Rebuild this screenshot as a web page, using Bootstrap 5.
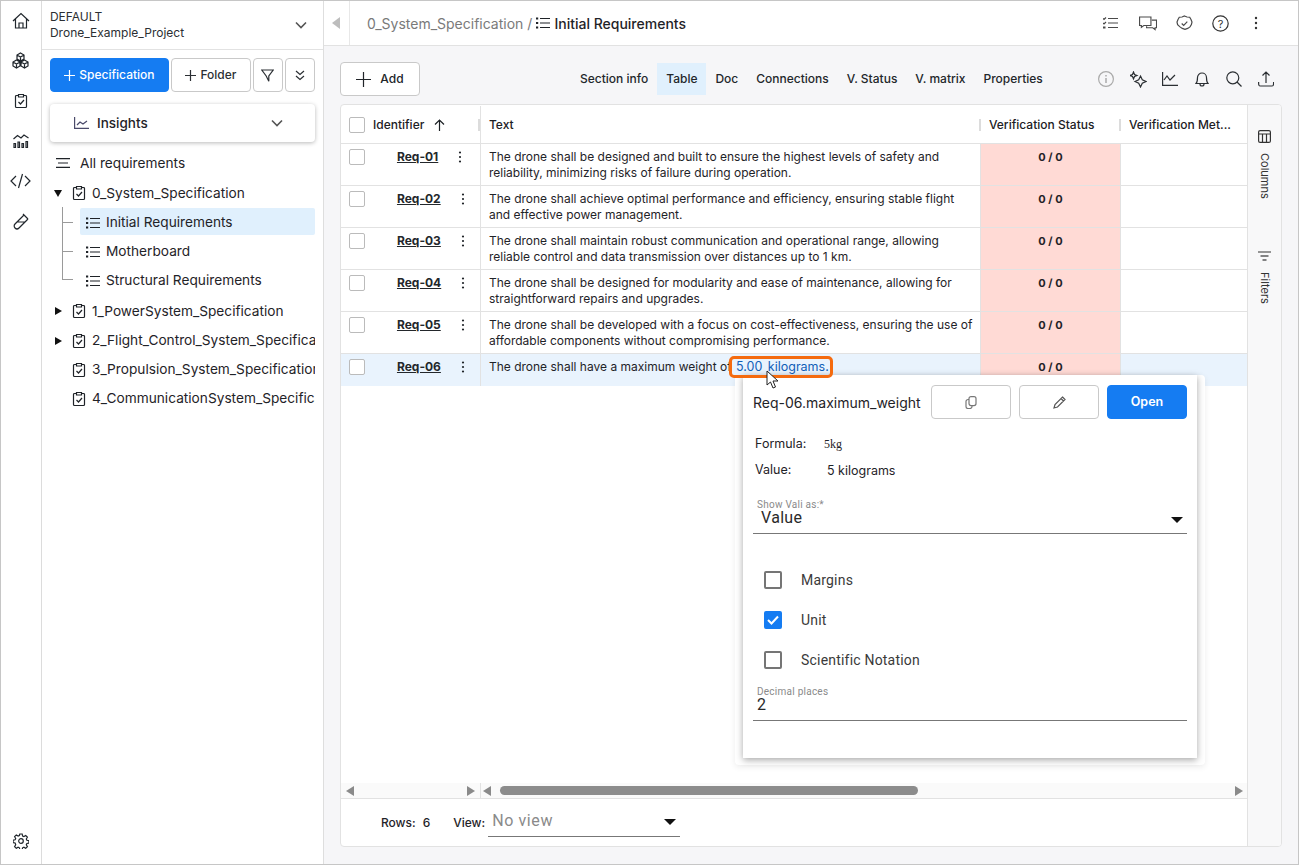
<!DOCTYPE html>
<html lang="en"><head><meta charset="utf-8"><title>Requirements</title>
<link href="https://cdn.jsdelivr.net/npm/bootstrap@5.3.0/dist/css/bootstrap.min.css" rel="stylesheet">
<style>
html,body{margin:0;height:865px;overflow:hidden;background:#fff}
body{font-family:Inter,"Liberation Sans",sans-serif;color:#1f2328;font-size:13px}
svg{display:block;fill:none;stroke:currentColor;stroke-width:1.2;flex:none}
.frame{width:1299px;height:865px;border:1px solid #c6c6c6;position:relative;overflow:hidden}
.rail{width:41px;border-right:1px solid #dcdcdc;padding-top:9px}
.rail-ico{height:40px;display:flex;justify-content:center;padding-top:2px;color:#20262c}
.side{width:282px;border-right:1px solid #dedede}
.side-head{height:49px;border-bottom:1px solid #e2e2e2;padding:0 16px 0 8px;font-size:12px;line-height:16px;color:#2b2f33}
.side-btn{height:34px;border:1px solid #c9c9c9;border-radius:4px;background:#fff;font-size:12px;font-weight:500;color:#2b2f33;padding:0}
.side-btn.btn-primary{background:#157cf2;border-color:#157cf2;color:#fff}
.insights{height:38px;margin:12px 8px 0;border-radius:4px;box-shadow:0 1px 4px rgba(0,0,0,.28);padding:0 32px 0 24px;font-size:13.5px;font-weight:500}
.tree{padding:6px 8px 0}
.tree-row{height:30px;white-space:nowrap;overflow:hidden;font-size:13.7px}
.tree-kid{height:29px;white-space:nowrap;font-size:13.7px;position:relative}
.kid-in{height:27px;margin-left:30px;padding:2px 0 0 6px;border-radius:2px}
.kid-in.on{background:#e0f0fd}
.tree-lines{position:absolute;left:61px;top:206px;width:11px;height:73px;border-left:1px solid #9a9a9a;border-bottom:1px solid #9a9a9a}
.tree-tick{position:absolute;left:62px;width:10px;height:1px;background:#9a9a9a}
.tri-r{width:0;height:0;border-left:7px solid #111;border-top:4px solid transparent;border-bottom:4px solid transparent}
.tri-d{width:0;height:0;border-top:7px solid #111;border-left:4.5px solid transparent;border-right:4.5px solid transparent}
.tri-w{width:17px;display:flex;justify-content:center;flex:none;margin-right:4px}
.clip-i{margin-right:6px;margin-left:1px}
.top-bar{height:45px;border-bottom:1px solid #e2e2e2;background:#fff}
.collapse-zone{width:26px;height:44px;border-right:1px solid #e8e8e8;color:#bdbdbd}
.crumb{padding-left:17px;font-size:14px}
.crumb-now{font-weight:500;margin-top:1px}
.content{background:#f6f6f8;flex:1;padding:16px 16px 17px 16px;min-height:0}
.add-btn{width:80px;height:34px;border:1px solid #c9c9c9;border-radius:4px;background:#fff;font-size:12px;font-weight:500;padding:0}
.tab-item{height:32px;line-height:32px;padding:0 9px;font-size:12px;font-weight:500;color:#23272b}
.tab-item.on{background:#e0f0fd}
.tool-ico{width:32px;display:flex;justify-content:center}
.grid-box{height:743px;margin-top:8px;background:#fff;border:1px solid #e2e2e2;border-radius:4px;overflow:hidden}
.g-main{width:908px;border-right:1px solid #e2e2e2}
.g-side{width:33px;background:#f8f8f9;color:#333}
.g-head{height:39px;border-bottom:1px solid #e2e2e2;font-size:12px;font-weight:500;color:#1c2024;padding-top:1px}
.c-id{width:140px;flex:none;border-right:1px solid #e2e2e2;padding-left:8px;position:relative}
.c-tx{width:500px;flex:none;padding:0 8px;position:relative}
.c-st{width:140px;flex:none;padding:0 8px;position:relative}
.c-me{flex:1;padding:0 8px;white-space:nowrap;overflow:hidden}
.sep{position:absolute;right:0;top:13px;width:2px;height:12px;background:#dcdcdc}
.box{width:16px;height:16px;border:1px solid #bbb;border-radius:2px;background:#fff;flex:none}
.g-row{height:42px;border-bottom:1px solid #e2e2e2;font-size:12px;line-height:16px}
.g-row.on{height:32px;background:#e9f3fd;border-bottom:0}
.g-row>div{padding-top:5px;height:100%}
.g-row .c-id{display:flex}
.req{margin-left:32px;font-weight:700;color:#23272b;text-decoration:underline}
.kebab{margin-left:20px;margin-top:2px}
.g-row .c-st{background:#ffdad5;border-left:1px solid #e2e2e2;border-right:1px solid #e2e2e2;text-align:center;font-size:11px;font-weight:700;padding-top:5px;width:141px;margin-left:-1px}
.hit{color:#1160b8;padding:0 2px;margin-left:-1px;font-size:12.5px;word-spacing:2px}
.hit-wrap{position:relative}
.hit-ring{position:absolute;left:-6px;right:-2px;top:-3px;bottom:-4px;border:3px solid #f56b0f;border-radius:5px;z-index:4}
.g-fill{flex:1}
.sbar{height:15px;background:#fafafa;border-bottom:1px solid #e2e2e2;box-sizing:content-box}
.s-left{width:140px;border-right:1px solid #e2e2e2;padding:0 5px;height:15px}
.s-a{width:0;height:0;border-top:5px solid transparent;border-bottom:5px solid transparent}
.s-a.l{border-right:8px solid #8a8a8a}.s-a.r{border-left:8px solid #8a8a8a}
.thumb{width:418px;height:9px;border-radius:5px;background:#8c8c8c;margin-left:9px}
.foot{height:47px;font-size:12px;padding:0 0 0 40px}
.mat{font-family:Roboto,"Liberation Sans",sans-serif}
.drop{width:192px;height:30px;border-bottom:1px solid #777;font-size:16px;color:#8a8a8a;padding:0 4px;letter-spacing:.6px}
.tri-m{width:0;height:0;border-top:6px solid #111;border-left:6px solid transparent;border-right:6px solid transparent}
.v-txt{writing-mode:vertical-rl;font-size:11px}
.pop-ghost{position:absolute;left:734px;top:374px;width:470px;height:390px;background:#fff;border-radius:4px;box-shadow:0 2px 6px rgba(0,0,0,.08)}
.pop-card{position:absolute;left:742px;top:374px;width:454px;height:383px;background:#fff;box-shadow:0 2px 7px rgba(0,0,0,.35);padding:10px 10px 0}
.pop-btn{width:80px;height:34px;border:1px solid #c9c9c9;border-radius:4px;background:#fff;padding:0;color:#777;display:flex;align-items:center;justify-content:center}
.pop-btn.btn-primary{background:#157cf2;border-color:#157cf2;color:#fff;font-size:12.5px;font-weight:600}
.m-label{font-size:10px;line-height:11px;color:#8a8a8a;letter-spacing:.25px}
.m-check{height:40px;font-size:14px;color:#3a3a3a;padding-left:11px;letter-spacing:.2px}
.m-box{width:18px;height:18px;border:2px solid #757575;border-radius:2px;margin-right:19px;flex:none}
.m-box.on{background:#157cf2;border-color:#157cf2;color:#fff;display:flex;align-items:center;justify-content:center}
.cursor{position:absolute;left:765px;top:369px;z-index:5}
</style></head><body>
<svg width="0" height="0" style="position:absolute">
<defs>
<symbol id="clip" viewBox="0 0 14 16"><path d="M4.500 2.500H2.500a1 1 0 0 0-1 1v10a1 1 0 0 0 1 1h9a1 1 0 0 0 1-1v-10a1 1 0 0 0-1-1h-2"/><path d="M4.500 1.500h5v2.500h-5z"/><path d="M4.500 9l2 2 3.500-4"/></symbol>
<symbol id="lst" viewBox="0 0 14 12"><path d="M4 1.500h10M4 6h10M4 10.500h10" stroke-width="1.100"/><path d="M0 .5h2.200v2H0zM0 5h2.200v2H0zM0 9.500h2.200v2H0z" fill="currentColor" stroke="none"/></symbol>
<symbol id="keb" viewBox="0 0 4 12"><circle cx="2" cy="1.500" r="1.100" fill="currentColor" stroke="none"/><circle cx="2" cy="6" r="1.100" fill="currentColor" stroke="none"/><circle cx="2" cy="10.500" r="1.100" fill="currentColor" stroke="none"/></symbol>
</defs></svg>
<div class="frame d-flex">
 <div class="rail d-flex flex-column">
  <div class="rail-ico"><svg width="18" height="18" viewBox="0 0 18 18"><path d="M1 9 9 1.500 17 9M3.500 7v9h11V7M7 16v-5h4v5"/></svg></div>
  <div class="rail-ico"><svg width="19" height="18" viewBox="0 0 19 18"><path d="M9.500 1 13 3v4L9.500 9 6 7V3zM5.500 8 9 10v4l-3.500 2L2 14v-4zM13.500 8 17 10v4l-3.500 2L10 14v-4zM6 3l3.500 2L13 3M9.500 5v4M2 10l3.500 2L9 10M5.500 12v4M10 10l3.500 2L17 10M13.500 12v4"/></svg></div>
  <div class="rail-ico"><svg width="14" height="16" viewBox="0 0 14 16" style="margin-top:1px"><use href="#clip"/></svg></div>
  <div class="rail-ico"><svg width="16" height="15" viewBox="0 0 16 15" style="margin-top:1px"><path d="M.5 6l4-3.500 3.500 2.500 3-3 4.500 3"/><path d="M1 10.500h1.500v4H1zM5 9h1.500v5.500H5zM9 10.500h1.500v4H9zM13 8.500h1.500v6H13z"/></svg></div>
  <div class="rail-ico"><svg width="21" height="16" viewBox="0 0 21 16" style="margin-top:1px"><path d="M6 3 1 8l5 5M15 3l5 5-5 5M12.500 1l-4 14"/></svg></div>
  <div class="rail-ico"><svg width="18" height="18" viewBox="0 0 18 18"><path d="M11 2l5 5M12 3 3 12a2.800 2.800 0 0 0 4 4l9-9M5 10h7.500"/></svg></div>
  <div class="rail-ico mt-auto" style="margin-bottom:1px;height:32px"><svg width="16" height="16" viewBox="0 0 16 16"><circle cx="8" cy="8" r="2.300"/><path d="M6.800 1h2.400l.4 2 1.300.6 1.800-1.100 1.700 1.700-1.100 1.800.6 1.300 2 .4v2.400l-2 .4-.6 1.300 1.100 1.800-1.700 1.700-1.800-1.100-1.300.6-.4 2H6.800l-.4-2-1.300-.6-1.800 1.100-1.700-1.700 1.100-1.800L2.100 10l-2-.4V7.200l2-.4.600-1.300-1.100-1.800 1.700-1.700 1.800 1.100 1.300-.6z"/></svg></div>
 </div>
 <div class="side d-flex flex-column">
  <div class="side-head d-flex justify-content-between align-items-center">
   <div><div>DEFAULT</div><div>Drone_Example_Project</div></div>
   <svg width="12" height="8" viewBox="0 0 12 8" style="color:#555;stroke-width:1.600"><path d="M1 1.500 6 6.500l5-5"/></svg>
  </div>
  <div class="d-flex" style="padding:8px 8px 0;gap:2px">
   <button class="btn btn-primary side-btn d-flex align-items-center justify-content-center gap-1" style="width:119px"><svg width="11" height="11" viewBox="0 0 11 11"><path d="M5.500 0v11M0 5.500h11"/></svg>Specification</button>
   <button class="btn side-btn d-flex align-items-center justify-content-center gap-1" style="width:80px"><svg width="11" height="11" viewBox="0 0 11 11"><path d="M5.500 0v11M0 5.500h11"/></svg>Folder</button>
   <button class="btn side-btn d-flex align-items-center justify-content-center" style="width:30px"><svg width="13" height="13" viewBox="0 0 13 13"><path d="M.8 1h11.400L7.800 7v5.200L5.200 7z"/></svg></button>
   <button class="btn side-btn d-flex align-items-center justify-content-center ms-0" style="width:30px"><svg width="10" height="11" viewBox="0 0 10 11"><path d="M1 1l4 3.500L9 1M1 6l4 3.500L9 6"/></svg></button>
  </div>
  <div class="insights d-flex align-items-center">
   <svg width="15" height="12" viewBox="0 0 15 12" class="me-2" style="color:#4a4a6a"><path d="M.6 0v11.400H15M3 8l3-3 3 2 4-3"/></svg>
   <span>Insights</span>
   <svg class="ms-auto" width="12" height="8" viewBox="0 0 12 8" style="color:#555;stroke-width:1.600"><path d="M1 1.500 6 6.500l5-5"/></svg>
  </div>
  <div class="tree">
   <div class="tree-row d-flex align-items-center"><svg width="14" height="10" viewBox="0 0 14 10" style="margin:0 10px 0 6px"><path d="M0 .6h14M2 5h10M0 9.400h14"/></svg>All requirements</div>
   <div class="tree-row d-flex align-items-center"><span class="tri-w"><span class="tri-d"></span></span><svg width="14" height="16" viewBox="0 0 14 16" class="clip-i"><use href="#clip"/></svg>0_System_Specification</div>
   <div class="tree-kid"><div class="kid-in on d-flex align-items-center"><svg width="14" height="12" viewBox="0 0 14 12" style="margin-right:6px"><use href="#lst"/></svg>Initial Requirements</div></div>
   <div class="tree-kid"><div class="kid-in d-flex align-items-center"><svg width="14" height="12" viewBox="0 0 14 12" style="margin-right:6px"><use href="#lst"/></svg>Motherboard</div></div>
   <div class="tree-kid" style="margin-bottom:1px"><div class="kid-in d-flex align-items-center"><svg width="14" height="12" viewBox="0 0 14 12" style="margin-right:6px"><use href="#lst"/></svg>Structural Requirements</div></div>
   <div class="tree-row d-flex align-items-center"><span class="tri-w"><span class="tri-r"></span></span><svg width="14" height="16" viewBox="0 0 14 16" class="clip-i"><use href="#clip"/></svg>1_PowerSystem_Specification</div>
   <div class="tree-row d-flex align-items-center" style="height:29px"><span class="tri-w"><span class="tri-r"></span></span><svg width="14" height="16" viewBox="0 0 14 16" class="clip-i"><use href="#clip"/></svg>2_Flight_Control_System_Specification</div>
   <div class="tree-row d-flex align-items-center" style="height:29px"><span class="tri-w"></span><svg width="14" height="16" viewBox="0 0 14 16" class="clip-i"><use href="#clip"/></svg>3_Propulsion_System_Specification</div>
   <div class="tree-row d-flex align-items-center" style="height:29px"><span class="tri-w"></span><svg width="14" height="16" viewBox="0 0 14 16" class="clip-i"><use href="#clip"/></svg>4_CommunicationSystem_Specification</div>
  </div>
  <div class="tree-lines"></div><div class="tree-tick" style="top:221px"></div><div class="tree-tick" style="top:250px"></div>
 </div>
 <div class="d-flex flex-column flex-grow-1" style="min-width:0">
  <div class="top-bar d-flex align-items-center">
   <div class="collapse-zone d-flex align-items-center justify-content-center"><span class="s-a l" style="border-right-color:#bdbdbd;border-top-width:6px;border-bottom-width:6px"></span></div>
   <div class="crumb d-flex align-items-center"><span style="color:#7a7a7a">0_System_Specification</span><span style="color:#7a7a7a;margin:0 4px">/</span><svg width="14" height="12" viewBox="0 0 14 12" style="margin-right:4px"><use href="#lst"/></svg><span class="crumb-now">Initial Requirements</span></div>
   <div class="ms-auto d-flex align-items-center" style="gap:18px;padding-right:40px;color:#4a4a4a">
    <svg width="15" height="12" viewBox="0 0 15 12"><path d="M5 1.500h10M5 6h10M5 10.500h10"/><path d="M0 1.500l1 1 2-2M0 6l1 1 2-2"/><path d="M0 9.500h2.500v2H0z" fill="currentColor" stroke="none"/></svg>
    <svg width="18" height="15" viewBox="0 0 19 15" style="margin-left:3px"><path d="M.6.600h12v9H5l-2.500 2v-2H.6z"/><path d="M13.500 4h5v8h-1.500v2l-2.500-2H8v-1.500"/></svg>
    <svg width="17" height="17" viewBox="0 0 17 17" style="margin-left:1px"><path d="M8.500 1l2.500 1 2.700.2 1.300 2.300 1 2.500-.6 2.600-1.400 2.300-2.300 1.500-2.700 1-2.700-1-2.300-1.500L1.600 9.600 1 7l1-2.500 1.300-2.300L6 2z"/><path d="M5.700 8.500l2 2 3.600-3.800"/></svg>
    <svg width="17" height="17" viewBox="0 0 17 17" style="margin-left:1px;color:#333"><circle cx="8.500" cy="8.500" r="7.700"/><text x="8.500" y="12.500" text-anchor="middle" font-size="11" fill="currentColor" stroke="none" font-family="Inter">?</text></svg>
    <svg width="4" height="14" viewBox="0 0 4 14" style="margin-left:7px;color:#333"><circle cx="2" cy="2" r="1.200" fill="currentColor" stroke="none"/><circle cx="2" cy="7" r="1.200" fill="currentColor" stroke="none"/><circle cx="2" cy="12" r="1.200" fill="currentColor" stroke="none"/></svg>
   </div>
  </div>
  <div class="content d-flex flex-column">
   <div class="d-flex align-items-center" style="height:34px">
    <button class="btn add-btn d-flex align-items-center justify-content-center" style="gap:9px"><svg width="15" height="15" viewBox="0 0 15 15"><path d="M7.500 0v15M0 7.500h15"/></svg>Add</button>
    <div class="d-flex" style="margin-left:151px">
     <div class="tab-item">Section info</div><div class="tab-item on">Table</div><div class="tab-item">Doc</div><div class="tab-item">Connections</div><div class="tab-item">V. Status</div><div class="tab-item">V. matrix</div><div class="tab-item">Properties</div>
    </div>
    <div class="ms-auto d-flex align-items-center" style="color:#2b2f33">
     <div class="tool-ico" style="color:#aaa"><svg width="16" height="16" viewBox="0 0 16 16"><circle cx="8" cy="8" r="7.400"/><path d="M8 7v5M8 4v1.500" stroke-width="1.500"/></svg></div>
     <div class="tool-ico"><svg width="17" height="17" viewBox="0 0 17 17"><path d="M10.500 5l1.800 3.700L16 10.500l-3.700 1.800-1.800 3.700-1.800-3.700L5 10.500l3.700-1.800zM3.500 1l1 2.500L7 4.500 4.500 5.500l-1 2.500-1-2.500L0 4.500l2.500-1z"/></svg></div>
     <div class="tool-ico"><svg width="16" height="14" viewBox="0 0 16 14"><path d="M.6 0v13.400H16M2 8l3-4 3 4 5-5"/></svg></div>
     <div class="tool-ico"><svg width="14" height="16" viewBox="0 0 14 16"><path d="M1 12.500c1.500-1.500 1.500-3 1.500-6a4.500 4.500 0 0 1 9 0c0 3 0 4.500 1.500 6zM5 13a2 2 0 0 0 4 0"/></svg></div>
     <div class="tool-ico"><svg width="16" height="16" viewBox="0 0 16 16"><circle cx="6.800" cy="6.800" r="6"/><path d="M11 11l4.500 4.500"/></svg></div>
     <div class="tool-ico"><svg width="16" height="16" viewBox="0 0 16 16"><path d="M8 12V1M4.500 4.500 8 1l3.500 3.500M.6 11c0 3 0 4 2 4h11c2 0 2-1 2-4"/></svg></div>
    </div>
   </div>
   <div class="grid-box d-flex">
    <div class="g-main d-flex flex-column">
     <div class="g-head d-flex">
      <div class="c-id d-flex align-items-center"><span class="box" style="margin-right:8px"></span>Identifier<svg width="11" height="12" viewBox="0 0 11 12" style="margin-left:10px"><path d="M5.500 12V1M1 5.500 5.500 1 10 5.500"/></svg><span class="sep"></span></div>
      <div class="c-tx d-flex align-items-center">Text<span class="sep"></span></div>
      <div class="c-st d-flex align-items-center">Verification Status<span class="sep"></span></div>
      <div class="c-me d-flex align-items-center">Verification Met...</div>
     </div>
     <div class="g-row d-flex"><div class="c-id"><span class="box"></span><a class="req">Req-01</a><svg class="kebab" width="4" height="12" viewBox="0 0 4 12"><use href="#keb"/></svg></div><div class="c-tx">The drone shall be designed and built to ensure the highest levels of safety and reliability, minimizing risks of failure during operation.</div><div class="c-st">0 / 0</div><div class="c-me"></div></div>
     <div class="g-row d-flex"><div class="c-id"><span class="box"></span><a class="req">Req-02</a><svg class="kebab" width="4" height="12" viewBox="0 0 4 12"><use href="#keb"/></svg></div><div class="c-tx">The drone shall achieve optimal performance and efficiency, ensuring stable flight and effective power management.</div><div class="c-st">0 / 0</div><div class="c-me"></div></div>
     <div class="g-row d-flex"><div class="c-id"><span class="box"></span><a class="req">Req-03</a><svg class="kebab" width="4" height="12" viewBox="0 0 4 12"><use href="#keb"/></svg></div><div class="c-tx">The drone shall maintain robust communication and operational range, allowing reliable control and data transmission over distances up to 1 km.</div><div class="c-st">0 / 0</div><div class="c-me"></div></div>
     <div class="g-row d-flex"><div class="c-id"><span class="box"></span><a class="req">Req-04</a><svg class="kebab" width="4" height="12" viewBox="0 0 4 12"><use href="#keb"/></svg></div><div class="c-tx">The drone shall be designed for modularity and ease of maintenance, allowing for straightforward repairs and upgrades.</div><div class="c-st">0 / 0</div><div class="c-me"></div></div>
     <div class="g-row d-flex"><div class="c-id"><span class="box"></span><a class="req">Req-05</a><svg class="kebab" width="4" height="12" viewBox="0 0 4 12"><use href="#keb"/></svg></div><div class="c-tx">The drone shall be developed with a focus on cost-effectiveness, ensuring the use of affordable components without compromising performance.</div><div class="c-st">0 / 0</div><div class="c-me"></div></div>
     <div class="g-row on d-flex"><div class="c-id"><span class="box"></span><a class="req">Req-06</a><svg class="kebab" width="4" height="12" viewBox="0 0 4 12"><use href="#keb"/></svg></div><div class="c-tx">The drone shall have a maximum weight of <span class="hit-wrap"><span class="hit">5.00 kilograms.</span><span class="hit-ring"></span></span></div><div class="c-st">0 / 0</div><div class="c-me"></div></div>
     <div class="g-fill"></div>
     <div class="sbar d-flex align-items-center">
      <div class="s-left d-flex align-items-center justify-content-between"><span class="s-a l"></span><span class="s-a r"></span></div>
      <span class="s-a l" style="margin-left:2px"></span><span class="thumb"></span><span class="s-a r ms-auto" style="margin-right:4px"></span>
     </div>
     <div class="foot d-flex align-items-center">
      <span style="font-weight:500">Rows:</span><span style="margin-left:7px;font-weight:500">6</span><span style="margin-left:23px;font-weight:500">View:</span>
      <div class="drop mat d-flex align-items-center justify-content-between" style="margin:-2px 0 0 3px"><span>No view</span><span class="tri-m" style="margin-top:2px"></span></div>
     </div>
    </div>
    <div class="g-side d-flex flex-column align-items-center" style="padding-top:25px">
     <svg width="13" height="13" viewBox="0 0 13 13"><rect x=".6" y=".6" width="11.800" height="11.800" rx="1.500"/><path d="M.6 4h11.800M4.500 4v8.400M8.500 4v8.400"/></svg>
     <span class="v-txt" style="margin-top:10px">Columns</span>
     <svg width="13" height="10" viewBox="0 0 13 10" style="margin-top:52px"><line x1="0" y1="1" x2="13" y2="1"/><line x1="2.500" y1="5" x2="10.500" y2="5"/><line x1="4.500" y1="9" x2="8.500" y2="9"/></svg>
     <span class="v-txt" style="margin-top:11px">Filters</span>
    </div>
   </div>
  </div>
 </div>
 <div class="pop-ghost"></div>
 <div class="pop-card">
  <div class="d-flex align-items-center">
   <span style="font-size:14px;width:178px;white-space:nowrap">Req-06.maximum_weight</span>
   <button class="btn pop-btn"><svg width="12" height="13" viewBox="0 0 12 13"><rect x="4" y=".6" width="7" height="9" rx="2"/><path d="M4 3.500H3a2 2 0 0 0-2 2v5a2 2 0 0 0 2 2h2a2 2 0 0 0 2-2v-1"/></svg></button>
   <button class="btn pop-btn" style="margin-left:8px"><svg width="13" height="13" viewBox="0 0 13 13" style="color:#555"><path d="M9.500 1l2.500 2.500L4.500 11 1 12l1-3.500zM8 2.500 10.500 5"/></svg></button>
   <button class="btn btn-primary pop-btn" style="margin-left:8px">Open</button>
  </div>
  <div class="d-flex align-items-center" style="height:20px;margin-top:15px;padding-left:2px;font-size:12.500px"><span style="width:69px">Formula:</span><span style="font-family:'Liberation Serif',serif;font-size:12px">5kg</span></div>
  <div class="d-flex align-items-center" style="height:20px;margin-top:7px;padding-left:2px;font-size:12.500px"><span style="width:72px;margin-top:-2px">Value:</span><span>5 kilograms</span></div>
  <div class="mat" style="margin-top:18px;border-bottom:1px solid #777;height:35px;padding-left:4px">
   <div class="m-label">Show Vali as:*</div>
   <div class="d-flex justify-content-between align-items-center" style="font-size:16px;line-height:16px;padding:0 4px;letter-spacing:.3px;color:#2a2a2a">Value<span class="tri-m" style="margin-top:4px"></span></div>
  </div>
  <div class="mat" style="margin-top:26px">
   <div class="m-check d-flex align-items-center"><span class="m-box"></span>Margins</div>
   <div class="m-check d-flex align-items-center"><span class="m-box on"><svg width="12" height="10" viewBox="0 0 12 10" style="stroke-width:2"><path d="M1 5l3.500 3.500L11 1.500"/></svg></span>Unit</div>
   <div class="m-check d-flex align-items-center"><span class="m-box"></span>Scientific Notation</div>
  </div>
  <div class="mat" style="margin-top:6px;border-bottom:1px solid #777;height:35px;padding-left:4px">
   <div class="m-label">Decimal places</div>
   <div style="font-size:16px;line-height:15px;color:#2a2a2a">2</div>
  </div>
 </div>
 <svg class="cursor" width="14" height="19" viewBox="0 0 14 19" style="color:#222;stroke-width:1"><path d="M1 1v14l3.500-3 2.500 6 2.500-1-2.500-6H12z" fill="#fff"/></svg>
</div>
</body></html>
